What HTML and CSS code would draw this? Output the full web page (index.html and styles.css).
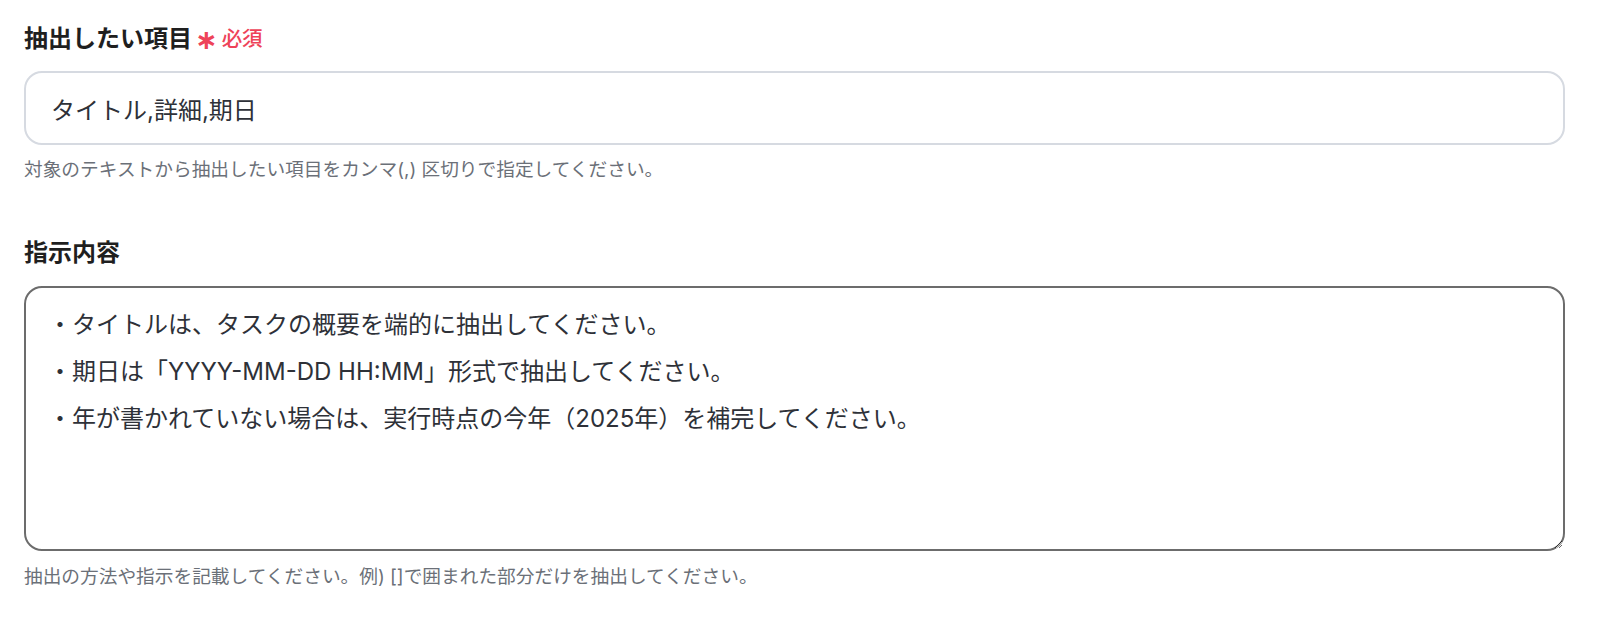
FILE: index.html
```html
<!DOCTYPE html>
<html>
<head>
<meta charset="utf-8">
<title>抽出設定</title>
<link rel="stylesheet" href="styles.css">
</head>
<body>
<div class="form">
  <div class="field field-items">
    <label class="label" for="items">抽出したい項目<span class="req"><span class="star">∗</span>必須</span></label>
    <input id="items" class="input" type="text" value="タイトル,詳細,期日">
    <p class="help">対象のテキストから抽出したい項目をカンマ(,) 区切りで指定してください。</p>
  </div>
  <div class="field field-instr">
    <label class="label label-instr" for="instr">指示内容</label>
    <textarea id="instr" class="textarea">・タイトルは、タスクの概要を端的に抽出してください。
・期日は「YYYY-MM-DD HH:MM」形式で抽出してください。
・年が書かれていない場合は、実行時点の今年（2025年）を補完してください。</textarea>
    <p class="help help-instr">抽出の方法や指示を記載してください。例) []で囲まれた部分だけを抽出してください。</p>
  </div>
</div>
</body>
</html>
```

FILE: styles.css
```css
html, body {
  margin: 0;
  padding: 0;
  background: #ffffff;
}
body {
  font-family: Inter, "Noto Sans CJK JP", "Noto Sans", sans-serif;
  color: #1f1f1f;
}
.form {
  display: flex;
  flex-direction: column;
  padding: 23px 35px 0 24px;
}
.field {
  display: flex;
  flex-direction: column;
}
.field-instr {
  margin-top: 53px;
}
.label {
  display: flex;
  align-items: center;
  font-size: 24px;
  line-height: 32px;
  font-weight: 700;
  color: #1f1f1f;
  margin-bottom: 16px;
}
.label-instr {
  margin-bottom: 17px;
}
.req {
  display: inline-flex;
  align-items: center;
  margin-left: 3px;
  color: #ee4359;
  font-size: 20.5px;
  font-weight: 500;
}
.star {
  font-family: "DejaVu Sans", sans-serif;
  font-size: 27px;
  font-weight: 700;
  margin-right: 4px;
  line-height: 1;
}
.input {
  box-sizing: border-box;
  height: 74px;
  width: 100%;
  border: 2px solid #d6dae1;
  border-radius: 18px;
  padding: 0 25px;
  font-family: inherit;
  font-size: 24px;
  color: #2e3138;
  background: #fff;
  outline: none;
}
.textarea {
  box-sizing: border-box;
  display: block;
  height: 265px;
  width: 100%;
  border: 2px solid #6c6c6c;
  border-radius: 18px;
  padding: 13px 22px;
  font-family: inherit;
  font-size: 24px;
  line-height: 47px;
  color: #2e3138;
  background: #fff;
  outline: none;
  resize: both;
}
.help {
  margin: 11px 0 0;
  font-size: 18.7px;
  line-height: 28px;
  color: #6b7078;
}
.help-instr {
  margin-top: 12px;
}
```
